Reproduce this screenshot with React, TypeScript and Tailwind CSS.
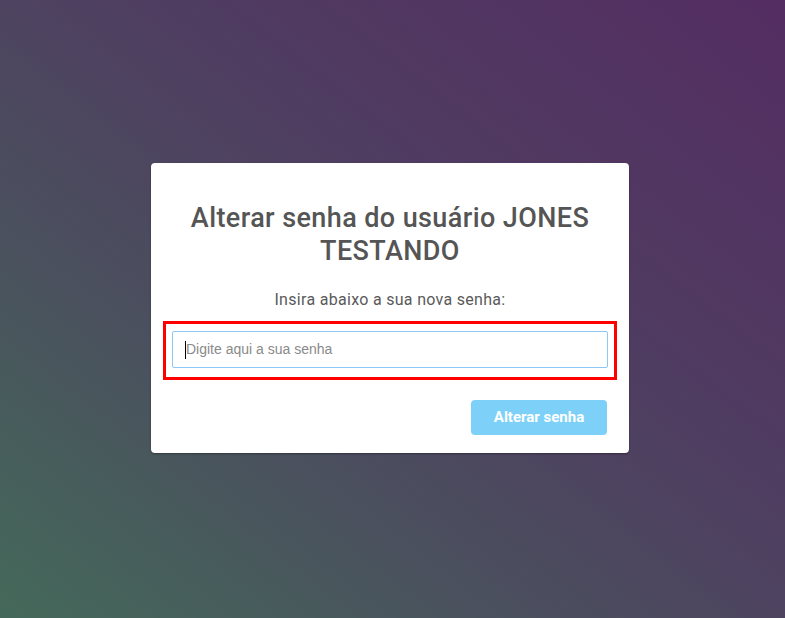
import React from "react";

export default function App() {
  return (
    <div className="w-[785px] h-[618px] overflow-hidden bg-[linear-gradient(to_top_right,#44695a_0%,#4b4e5e_35%,#4f3d61_60%,#542d62_100%)] pt-[163px]" style={{ fontFamily: "Roboto, 'Open Sans', sans-serif" }}>
      <div className="ml-[151px] w-[478px] rounded-[4px] bg-white shadow-[0_1px_2px_rgba(0,0,0,0.35)] pb-[18px]">
        <h1 className="px-[20px] pt-[39px] text-center text-[27px] leading-[33px] font-medium tracking-[0.4px] text-[#555555]">
          Alterar senha do usuário JONES TESTANDO
        </h1>
        <p className="mt-[22px] text-center text-[16px] leading-[20px] tracking-[0.3px] text-[#5a5a5a]">
          Insira abaixo a sua nova senha:
        </p>
        <div className="mx-[12px] mt-[11px] border-[3px] border-[#ff0000] px-[6px] pt-[7px] pb-[9px]">
          <div className="relative flex h-[37px] items-center rounded-[2px] border border-[#8ec8f7] pl-[13px]">
            <span className="absolute left-[12px] top-[9px] h-[18px] w-px bg-black" />
            <span className="text-[14px] text-[#8a8a8a]" style={{ fontFamily: "'Liberation Sans', Arial, sans-serif" }}>
              Digite aqui a sua senha
            </span>
          </div>
        </div>
        <div className="mt-[20px] flex justify-end pr-[22px]">
          <button className="h-[35px] w-[136px] rounded-[4px] bg-[#7dd1f8] text-[15px] font-bold text-white">
            Alterar senha
          </button>
        </div>
      </div>
    </div>
  );
}
